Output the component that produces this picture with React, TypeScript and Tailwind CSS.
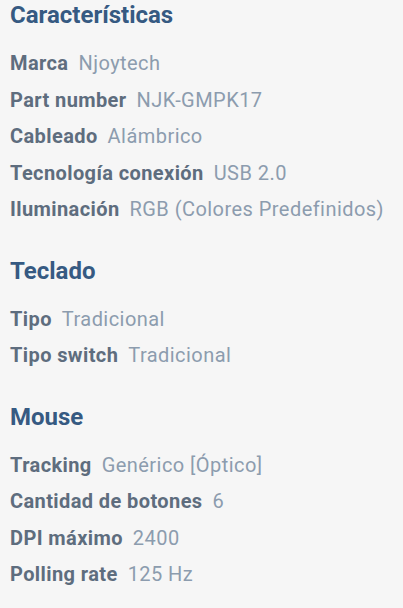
const sections = [
  {
    title: "Características",
    rows: [
      ["Marca", "Njoytech"],
      ["Part number", "NJK-GMPK17"],
      ["Cableado", "Alámbrico"],
      ["Tecnología conexión", "USB 2.0"],
      ["Iluminación", "RGB (Colores Predefinidos)"],
    ],
  },
  {
    title: "Teclado",
    rows: [
      ["Tipo", "Tradicional"],
      ["Tipo switch", "Tradicional"],
    ],
  },
  {
    title: "Mouse",
    rows: [
      ["Tracking", "Genérico [Óptico]"],
      ["Cantidad de botones", "6"],
      ["DPI máximo", "2400"],
      ["Polling rate", "125 Hz"],
    ],
  },
];

export default function App() {
  return (
    <div className="flex min-h-[608px] w-full flex-col gap-[28px] bg-[#f6f6f6] px-[10px] font-['Roboto',sans-serif]">
      {sections.map((s) => (
        <section key={s.title}>
          <h2 className="text-[24px] font-bold leading-[30px] text-[#365a82]">{s.title}</h2>
          <dl className="mt-[15px] flex flex-col">
            {s.rows.map(([k, v]) => (
              <div key={k} className="flex gap-[10px] text-[20px] leading-[36.5px] tracking-[0.4px]">
                <dt className="font-bold text-[#5e6d7e]">{k}</dt>
                <dd className="tracking-[0.45px] text-[#8c9cae]">{v}</dd>
              </div>
            ))}
          </dl>
        </section>
      ))}
    </div>
  );
}
